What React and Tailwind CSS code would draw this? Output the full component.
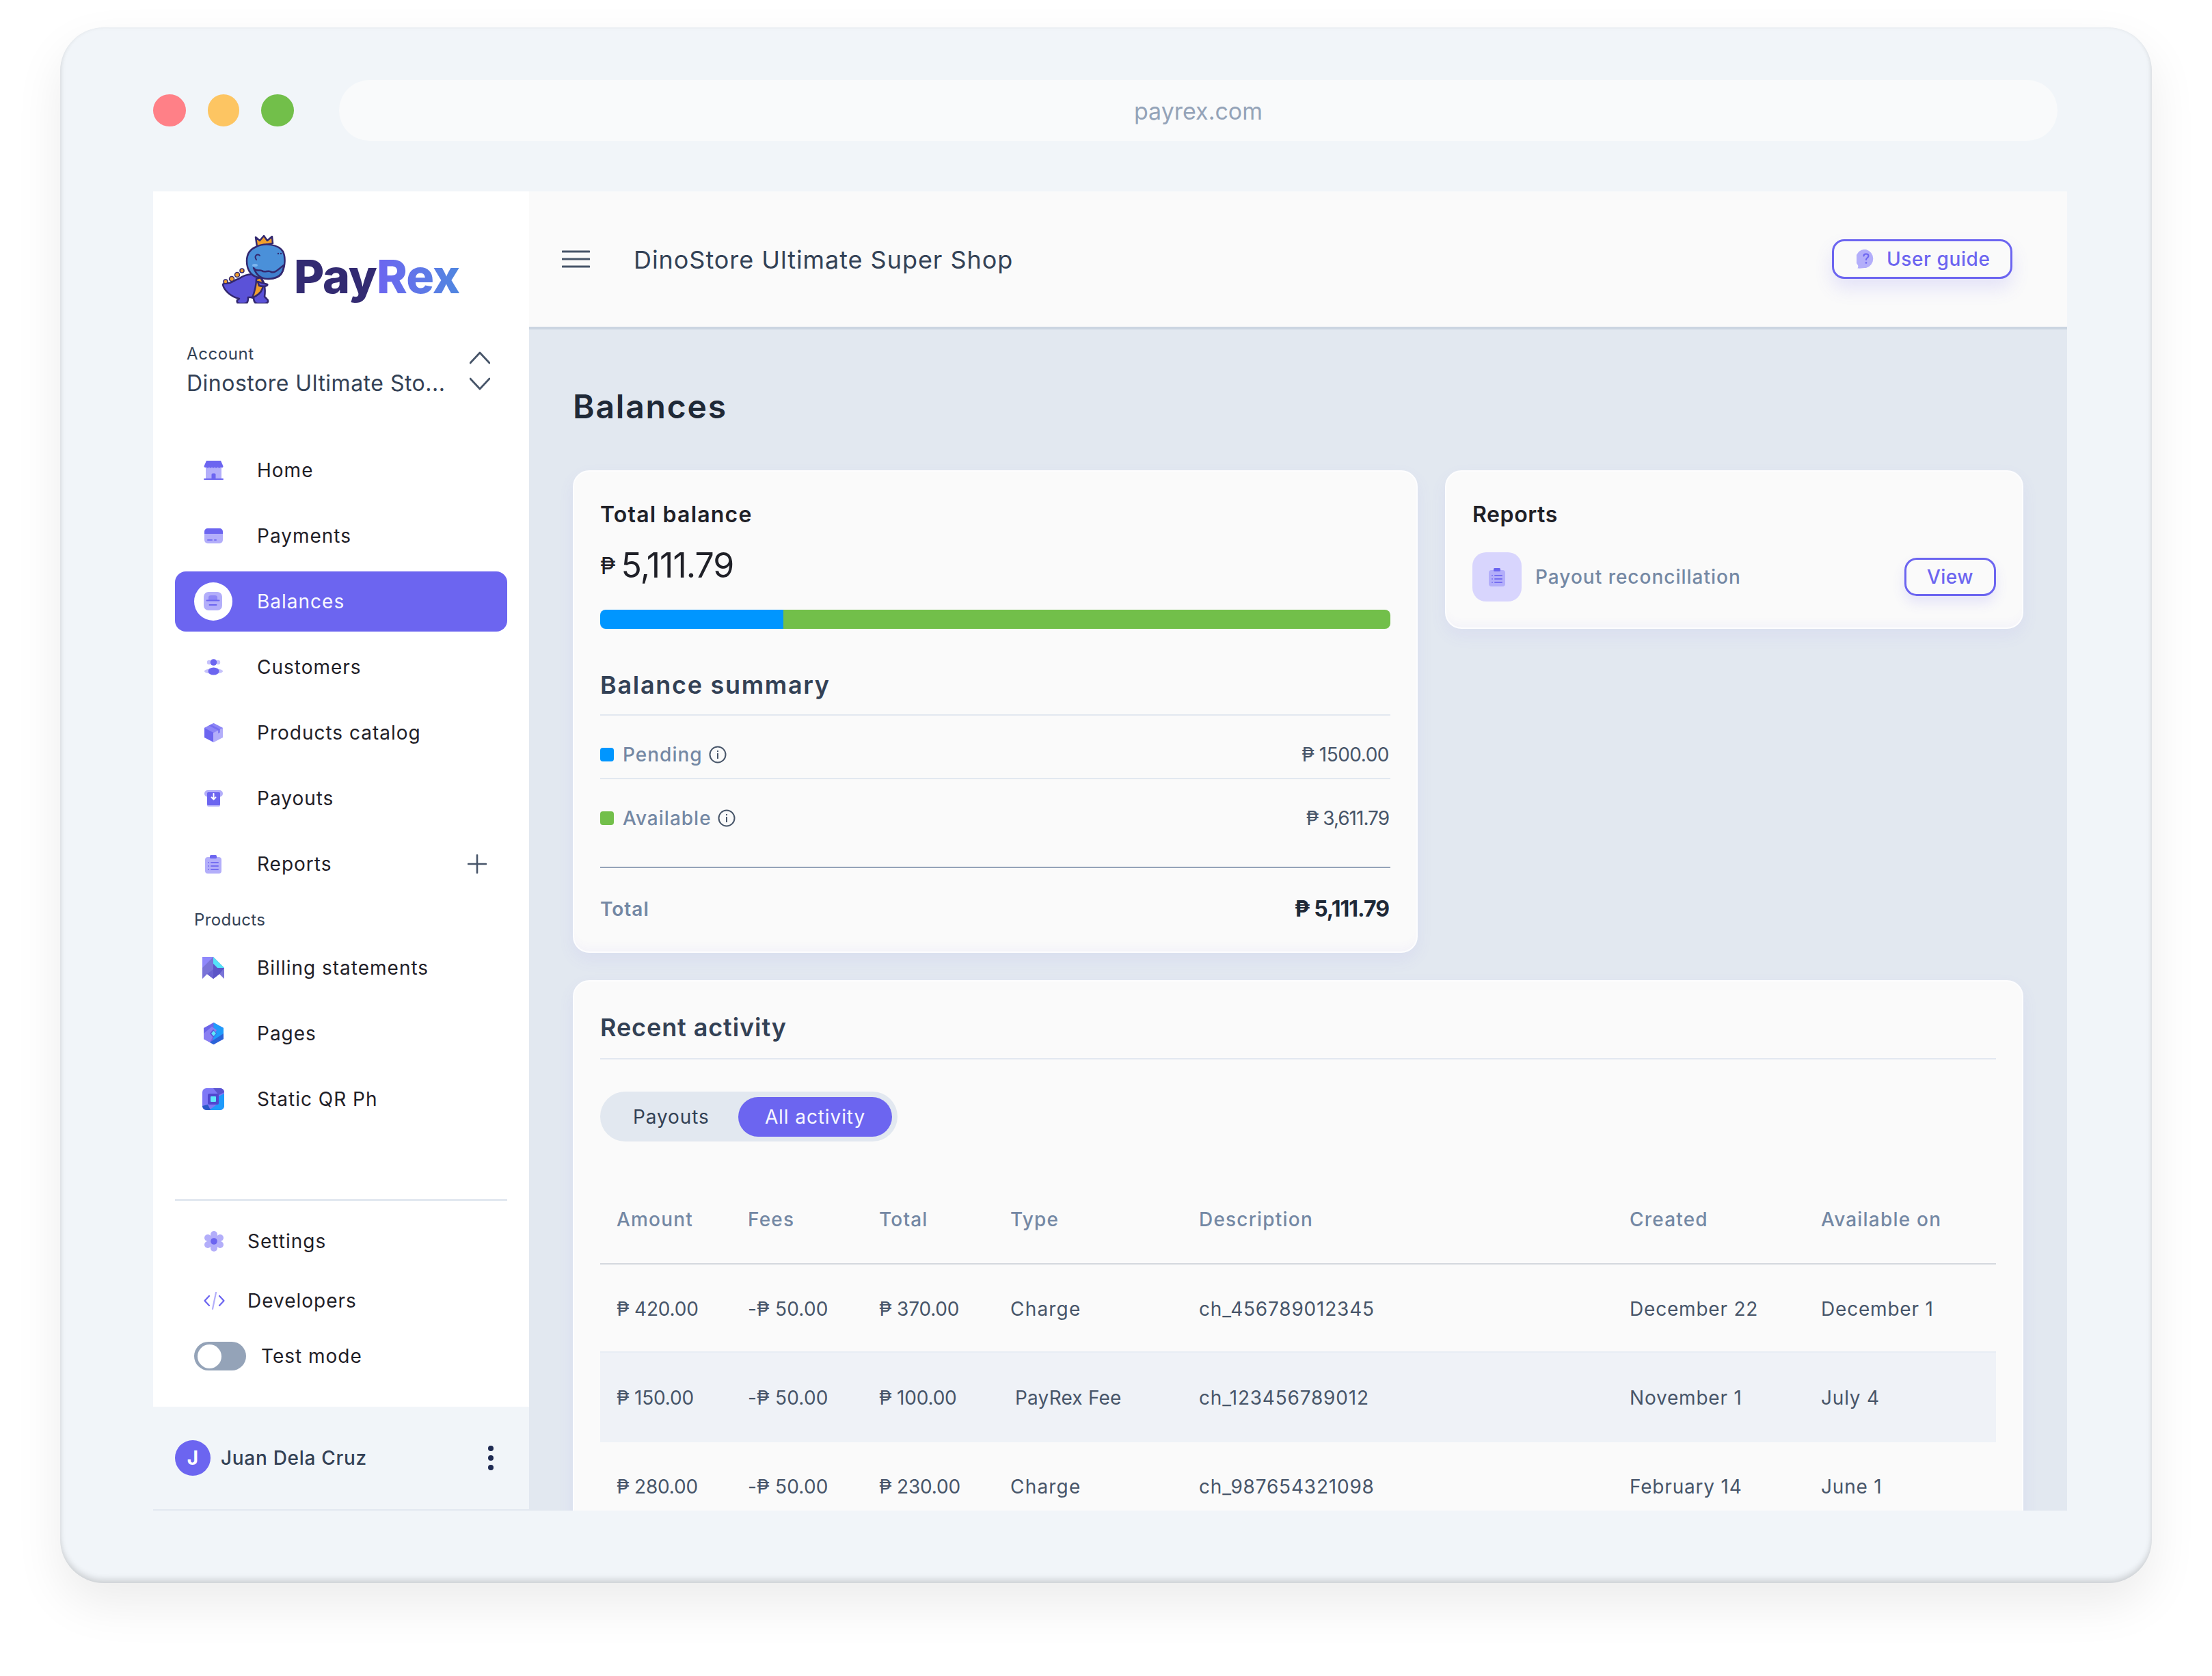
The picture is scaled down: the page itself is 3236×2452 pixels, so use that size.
import React from "react";

const D = "#6c65f0";
const L = "#b3aefa";

const Store = () => (
  <svg width="29" height="28" viewBox="0 0 29 28">
    <rect x="3" y="8" width="23" height="18" fill={L} />
    <path d="M4 0H25L28.5 8C28.5 10.5 26 10.5 25 9.5C24 11 21.5 11 20.5 9.5C19.5 11 17 11 16 9.5C15 11 13 11 12 9.5C11 11 9 11 8 9.5C7 11 4.5 11 4 9.5C2.5 10.5 0.5 10 0.5 8Z" fill={D} />
    <path d="M11.5 26V20.5C11.5 19 12.5 18.5 14.5 18.5C16.5 18.5 17.5 19 17.5 20.5V26Z" fill={D} />
    <rect x="0" y="26" width="29" height="2" rx="1" fill={D} />
  </svg>
);
const Card = () => (
  <svg width="27" height="22" viewBox="0 0 27 22">
    <rect width="27" height="22" rx="5" fill={L} />
    <path d="M0 8V5A5 5 0 0 1 5 0H22A5 5 0 0 1 27 5V8Z" fill={D} />
    <rect x="4" y="16" width="8" height="2" rx="1" fill={D} opacity=".8" />
    <rect x="14" y="16" width="4" height="2" rx="1" fill={D} opacity=".8" />
  </svg>
);
const Wallet = () => (
  <svg width="28" height="28" viewBox="0 0 28 28">
    <rect width="27" height="27" rx="7" fill={L} />
    <path d="M7 12V8C7 6 8.5 5 10.5 5H16.5C18.5 5 20 6 20 8V12Z" fill="#8d86f6" />
    <rect x="3.5" y="11.5" width="20" height="2" rx="1" fill={D} />
    <rect x="7.5" y="18" width="12" height="2" rx="1" fill={D} />
  </svg>
);
const People = () => (
  <svg width="27" height="24" viewBox="0 0 27 24">
    <circle cx="7" cy="5" r="3.2" fill={L} opacity=".75" />
    <circle cx="20" cy="5" r="3.2" fill={L} opacity=".75" />
    <ellipse cx="13.5" cy="18" rx="13.5" ry="4" fill={L} opacity=".75" />
    <circle cx="13.5" cy="5" r="4.8" fill={D} />
    <ellipse cx="13.5" cy="18" rx="8" ry="5.5" fill={D} />
  </svg>
);
const Box = () => (
  <svg width="27" height="28" viewBox="0 0 27 28">
    <path d="M13.5 0L27 7V21L13.5 28Z" fill={L} />
    <path d="M13.5 0L0 7V21L13.5 28Z" fill={D} />
    <path d="M13.5 0L27 7L13.5 14L0 7Z" fill="#8d86f6" />
    <path d="M6.5 3.5L20 10.5V15L23 13.5V9L9.5 2Z" fill={D} opacity=".7" />
    <path d="M13.5 14V28" stroke={L} strokeWidth="1" />
  </svg>
);
const Payout = () => (
  <svg width="27" height="24" viewBox="0 0 27 24">
    <rect y="0" width="27" height="10" rx="5" fill={L} />
    <rect x="4" y="20" width="19" height="4" rx="2" fill={L} />
    <rect x="4" y="3" width="19" height="19" rx="1.5" fill={D} />
    <path d="M13.5 5V13M10.5 10.5L13.5 13.5L16.5 10.5" stroke="#fff" strokeWidth="2" fill="none" strokeLinecap="round" strokeLinejoin="round" />
  </svg>
);
const Clip = ({ w = 24, h = 27 }) => (
  <svg width={w} height={h} viewBox="0 0 24 27">
    <rect y="3" width="24" height="24" rx="4" fill={L} />
    <rect x="7" y="0" width="10" height="5" rx="1.5" fill={D} />
    <g fill={D} opacity=".85">
      <rect x="4" y="10" width="2" height="2" rx="1" />
      <rect x="4" y="15" width="2" height="2" rx="1" />
      <rect x="4" y="20" width="2" height="2" rx="1" />
      <rect x="8" y="10" width="12" height="2" rx="1" />
      <rect x="8" y="15" width="12" height="2" rx="1" />
      <rect x="8" y="20" width="12" height="2" rx="1" />
    </g>
  </svg>
);
const Billing = () => (
  <svg width="32" height="32" viewBox="0 0 32 32">
    <path d="M0 0H16L32 16V32L25 25L16 32L7 25L0 32Z" fill="#7a74d8" />
    <path d="M0 0H16L0 16Z" fill="#8f88fb" />
    <path d="M16 0L32 16H22L16 10Z" fill="#55e3f8" />
    <path d="M16 10L22 16H32L25 25L16 32V18Z" fill="#5c55c7" />
    <path d="M16 18V32L7 25Z" fill="#6a63d2" />
  </svg>
);
const Hex = () => (
  <svg width="29" height="32" viewBox="0 0 29 32">
    <path d="M14.5 0L29 8V24L14.5 32L0 24V8Z" fill="#6c65e8" />
    <path d="M14.5 0L29 8V16L14 31Z" fill="#1f9bfb" />
    <path d="M29 16V24L14.5 32L9 29Z" fill="#2a63d8" />
    <path d="M0 24V16L12 6L19 11L9 29Z" fill="#8a7ff2" />
    <path d="M14 10L19 16L14 22L9 16Z" fill="#5a52d6" />
    <path d="M14.5 12L18 16L14.5 20L11 16Z" fill="#5de8fb" />
  </svg>
);
const Qr = () => (
  <svg width="32" height="32" viewBox="0 0 32 32">
    <rect width="32" height="32" rx="6" fill="#7e78f6" />
    <path d="M16 0H26A6 6 0 0 1 32 6L24 10Z" fill="#5b54d0" />
    <path d="M32 8V26A6 6 0 0 1 26 32H10L24 22V12Z" fill="#1f9bfb" />
    <path d="M0 26L8 24L12 32H6A6 6 0 0 1 0 26Z" fill="#2a58c8" />
    <rect x="8" y="8" width="16" height="16" rx="2" fill="#5147cf" />
    <rect x="12" y="12" width="8" height="8" rx="1" fill="#5ee9fc" />
  </svg>
);
const Gear = () => (
  <svg width="30" height="30" viewBox="0 0 30 30">
    <g fill={L}>
      <circle cx="15" cy="15" r="10" />
      <circle cx="15" cy="5" r="5" />
      <circle cx="15" cy="25" r="5" />
      <circle cx="6" cy="10" r="5" />
      <circle cx="24" cy="10" r="5" />
      <circle cx="6" cy="20" r="5" />
      <circle cx="24" cy="20" r="5" />
    </g>
    <circle cx="15" cy="15" r="4.8" fill={D} />
  </svg>
);
const Code = () => (
  <svg width="31" height="26" viewBox="0 0 31 26">
    <path d="M8 6L1.5 13L8 20M23 6L29.5 13L23 20" stroke={D} strokeWidth="2.2" fill="none" strokeLinecap="round" strokeLinejoin="round" />
    <path d="M18 1L13 25" stroke={L} strokeWidth="2.2" strokeLinecap="round" />
  </svg>
);
const Help = () => (
  <svg width="28" height="28" viewBox="0 0 28 28">
    <path d="M14 0A14 14 0 0 1 14 27C10 27 6 28 1.5 27.5C2.5 26 2.5 24.5 2 23A14 14 0 0 1 14 0Z" fill={L} />
    <path d="M10.5 9.5C10.5 7.5 12 6.5 14 6.5C16 6.5 17.5 7.5 17.5 9.5C17.5 12 14 12 14 15" stroke={D} strokeWidth="2" fill="none" strokeLinecap="round" />
    <circle cx="14" cy="19.5" r="1.3" fill={D} />
  </svg>
);
const Info = () => (
  <svg width="26" height="26" viewBox="0 0 26 26" className="shrink-0">
    <circle cx="13" cy="13" r="11.5" stroke="#475569" strokeWidth="2" fill="none" />
    <rect x="12" y="11" width="2" height="8" fill="#475569" />
    <rect x="12" y="7" width="2" height="2" fill="#475569" />
  </svg>
);
const Dino = () => (
  <svg width="93" height="100" viewBox="0 0 93 100" className="shrink-0">
    <g stroke="#33286f" strokeWidth="2.5" strokeLinejoin="round">
      <path d="M49 3L55 8L61 1L66 8L73 2L74 12L51 17Z" fill="#f0a02c" />
      <path d="M6 70C13 72 16 66 24 64C30 60 42 54 54 60C62 66 64 76 62 90L65 93C69 96 67 100 62 100H52C47 100 46 96 46 91L38 91C38 96 38 100 32 100H26C21 100 20 95 25 93C12 90 2 80 1 72C2 71 4 70 6 70Z" fill="#5b52d8" />
      <path d="M56 62C60 68 62 72 58 80C56 86 48 90 44 92C47 84 50 74 50 64Z" fill="#f0a02c" />
      <path d="M52 68L66 72C68 74 62 76 54 74Z" fill="#5b52d8" />
      <path d="M50 17C62 11 82 13 89 24C93 32 92 46 88 54C84 64 68 66 58 62C44 63 36 52 36 38C36 27 42 20 50 17Z" fill="#4a90d9" />
      <path d="M46 48C50 54 54 50 58 52C62 56 68 50 72 54C78 56 84 48 90 44C90 58 80 64 66 64C56 64 50 58 46 48Z" fill="#3f7fce" />
    </g>
    <g fill="#f0a02c" stroke="#33286f" strokeWidth="1.5">
      <circle cx="5" cy="68" r="3" />
      <circle cx="14" cy="64" r="3.5" />
      <circle cx="22" cy="58" r="3.5" />
      <circle cx="29" cy="52" r="3" />
    </g>
    <path d="M50 36C46 30 52 26 55 30" stroke="#33286f" strokeWidth="2" fill="none" strokeLinecap="round" />
    <ellipse cx="48" cy="44" rx="4" ry="2" fill="#7eb6ee" />
    <circle cx="82" cy="27" r="1.2" fill="#33286f" />
    <circle cx="86" cy="27" r="1.2" fill="#33286f" />
  </svg>
);

const nav = [
  { label: "Home", icon: <Store /> },
  { label: "Payments", icon: <Card /> },
  { label: "Balances", icon: <Wallet />, active: true },
  { label: "Customers", icon: <People /> },
  { label: "Products catalog", icon: <Box /> },
  { label: "Payouts", icon: <Payout /> },
  { label: "Reports", icon: <Clip />, plus: true },
];
const products = [
  { label: "Billing statements", icon: <Billing /> },
  { label: "Pages", icon: <Hex /> },
  { label: "Static QR Ph", icon: <Qr /> },
];

function NavItem({ item }) {
  return (
    <div className={`flex h-[88px] items-center rounded-[16px] pl-[28px] pr-[30px] text-[28px] ${item.active ? "bg-[#6c65f0] text-[#f8f8ff]" : "text-[#1f2027]"}`}>
      <span className={`flex h-[56px] w-[56px] shrink-0 items-center justify-center rounded-full ${item.active ? "bg-white" : ""}`}>{item.icon}</span>
      <span className="ml-[36px] tracking-[1px]">{item.label}</span>
      {item.plus && (
        <svg width="28" height="28" viewBox="0 0 28 28" className="ml-auto">
          <path d="M14 1V27M1 14H27" stroke="#475569" strokeWidth="2.6" strokeLinecap="round" />
        </svg>
      )}
    </div>
  );
}

function Sidebar() {
  return (
    <aside className="flex w-[550px] shrink-0 flex-col bg-white">
      <div className="flex h-[220px] items-start pl-[101px] pt-[64px]">
        <Dino />
        <div className="ml-[12px] mt-[24px] text-[68px] font-extrabold leading-[72px] tracking-[-1px]">
          <span className="text-[#332b72]">Pay</span>
          <span className="bg-linear-to-r from-[#6c65f0] to-[#4f86e0] bg-clip-text text-transparent">Rex</span>
        </div>
      </div>
      <div className="flex h-[144px] items-start justify-between pl-[49px] pr-[57px]">
        <div className="text-[#334155]">
          <div className="text-[24px] leading-[36px] tracking-[0.6px]">Account</div>
          <div className="mt-[3px] w-[390px] truncate text-[32px] leading-[44px] tracking-[0.5px]">Dinostore Ultimate Sto...</div>
        </div>
        <svg width="30" height="58" viewBox="0 0 30 58" className="mt-[14px] shrink-0">
          <path d="M1 17L15 2L29 17M1 40L15 55L29 40" stroke="#475569" strokeWidth="2.8" fill="none" strokeLinecap="round" strokeLinejoin="round" />
        </svg>
      </div>
      <div className="flex flex-col gap-[8px] px-[32px]">
        {nav.map((n) => (
          <NavItem key={n.label} item={n} />
        ))}
      </div>
      <div className="ml-[60px] mt-[21px] text-[24px] leading-[34px] tracking-[0.4px] text-[#334155]">Products</div>
      <div className="mt-[9px] flex flex-col gap-[8px] px-[32px]">
        {products.map((n) => (
          <NavItem key={n.label} item={n} />
        ))}
      </div>
      <div className="mx-[32px] mt-[102px] h-[3px] bg-[#e2e8f0]" />
      <div className="mt-[15px] flex flex-col pl-[60px] text-[28px] tracking-[1px] text-[#1f2027]">
        <div className="flex h-[87px] items-center">
          <span className="flex w-[58px] justify-center"><Gear /></span>
          <span className="ml-[20px]">Settings</span>
        </div>
        <div className="flex h-[87px] items-center">
          <span className="flex w-[58px] justify-center"><Code /></span>
          <span className="ml-[20px]">Developers</span>
        </div>
        <div className="mt-[17px] flex h-[42px] items-center">
          <div className="flex h-[42px] w-[76px] items-center rounded-full bg-[#94a3b8] pl-[5px]">
            <div className="h-[35px] w-[35px] rounded-full bg-white" />
          </div>
          <span className="ml-[22px]">Test mode</span>
        </div>
      </div>
      <div className="mt-auto flex h-[152px] items-center border-b-2 border-[#e2e8f0] bg-[#f1f5f9] px-[32px]">
        <div className="flex h-[52px] w-[52px] items-center justify-center rounded-full bg-[#6c65f0] text-[28px] font-bold text-white">J</div>
        <span className="ml-[15px] text-[28px] font-medium tracking-[0.7px] text-[#334155]">Juan Dela Cruz</span>
        <svg width="10" height="38" viewBox="0 0 10 38" className="ml-auto mr-[19px]">
          <circle cx="5" cy="5" r="4" fill="#1e2a52" />
          <circle cx="5" cy="19" r="4" fill="#1e2a52" />
          <circle cx="5" cy="33" r="4" fill="#1e2a52" />
        </svg>
      </div>
    </aside>
  );
}

const cardCls = "rounded-[24px] border-2 border-[#fdfdfe] bg-[#fafafa] shadow-[0_10px_24px_rgba(108,101,240,0.07),inset_0_-14px_14px_-10px_rgba(108,101,240,0.05)]";

function SummaryRow({ color, label, value, cls, valueCls }) {
  return (
    <div className={`flex items-center justify-between ${cls}`}>
      <div className="flex h-[40px] items-center">
        <span className={`h-[20px] w-[20px] rounded-[4px] ${color}`} />
        <span className="ml-[13px] text-[28px] font-medium leading-[40px] tracking-[1px] text-[#7488a4]">{label}</span>
        <span className="ml-[9px] flex"><Info /></span>
      </div>
      <span className={`pr-[2px] text-[28px] leading-[40px] text-[#475569] ${valueCls}`}>{value}</span>
    </div>
  );
}

function TotalCard() {
  return (
    <section className={`h-[706px] w-[1236px] shrink-0 px-[38px] pt-[41px] ${cardCls}`}>
      <div className="text-[32px] font-semibold leading-[44px] tracking-[1.2px] text-[#1f2027]">Total balance</div>
      <div className="mt-[20px] flex h-[64px] items-center text-[#1f2027]">
        <span className="text-[34px]">₱</span>
        <span className="ml-[8px] text-[50px] tracking-[-1px]">5,111.79</span>
      </div>
      <div className="mt-[33px] flex h-[28px] overflow-hidden rounded-[8px]">
        <div className="w-[268px] bg-[#0096ff]" />
        <div className="flex-1 bg-[#72bf4a]" />
      </div>
      <div className="mt-[57px] text-[36px] font-semibold leading-[50px] tracking-[1.7px] text-[#334155]">Balance summary</div>
      <div className="mt-[18px] h-[2px] bg-[#e2e8f0]" />
      <SummaryRow color="bg-[#0096ff]" label="Pending" value="₱ 1500.00" valueCls="tracking-[-0.5px]" cls="border-b-2 border-[#e2e8f0] pb-[14px] pt-[37px]" />
      <SummaryRow color="bg-[#72bf4a]" label="Available" value="₱ 3,611.79" valueCls="tracking-[-1px]" cls="pt-[37px]" />
      <div className="mt-[51px] h-[2px] bg-[#94a3b8]" />
      <div className="mt-[38px] flex h-[44px] items-center justify-between">
        <span className="text-[28px] font-semibold tracking-[1px] text-[#7488a4]">Total</span>
        <span className="pr-[2px] text-[32px] font-bold tracking-[-1px] text-[#1f2937]">₱ 5,111.79</span>
      </div>
    </section>
  );
}

function ReportsCard() {
  return (
    <section className={`flex-1 px-[38px] pb-[38px] pt-[41px] ${cardCls}`}>
      <div className="text-[32px] font-semibold leading-[44px] tracking-[0.6px] text-[#1f2027]">Reports</div>
      <div className="mt-[33px] flex h-[72px] items-center">
        <div className="flex h-[72px] w-[72px] items-center justify-center rounded-[20px] bg-[#d8d5fd]">
          <Clip w={24} h={27} />
        </div>
        <span className="ml-[20px] text-[28px] font-medium tracking-[1px] text-[#7488a4]">Payout reconcillation</span>
        <div className="ml-auto flex h-[56px] w-[134px] items-center justify-center rounded-[18px] border-[3px] border-[#6c65f0] text-[28px] font-medium tracking-[0.5px] text-[#6c65f0] shadow-[0_10px_18px_rgba(108,101,240,0.14)]">View</div>
      </div>
    </section>
  );
}

const cols = "grid grid-cols-[192px_192px_192px_276px_630px_280px_1fr] items-center pl-[24px]";
const cellTracks = ["tracking-[-0.2px]", "tracking-[0.2px]", "tracking-[-0.2px]", "tracking-[1.2px]", "tracking-[0.8px]", "tracking-[0.8px]", "tracking-[0.8px]"];
const rows = [
  { c: ["₱ 420.00", "-₱ 50.00", "₱ 370.00", "Charge", "ch_456789012345", "December 22", "December 1"], cls: "h-[127px] pt-[2px]" },
  { c: ["₱ 150.00", "-₱ 50.00", "₱ 100.00", "PayRex Fee", "ch_123456789012", "November 1", "July 4"], cls: "h-[133px] border-t-2 border-[#e8edf4] bg-[#eff2f7]", shift: true },
  { c: ["₱ 280.00", "-₱ 50.00", "₱ 230.00", "Charge", "ch_987654321098", "February 14", "June 1"], cls: "h-[130px]" },
];

function Activity() {
  return (
    <section className={`mt-[40px] px-[38px] pt-[42px] ${cardCls}`}>
      <div className="text-[36px] font-semibold leading-[50px] tracking-[0.9px] text-[#334155]">Recent activity</div>
      <div className="mt-[20px] h-[2px] bg-[#e2e8f0]" />
      <div className="mt-[47px] flex h-[73px] w-[435px] items-center rounded-full bg-[#e2e8f0] pl-[48px] pr-[8px] text-[28px] tracking-[0.9px]">
        <span className="text-[#334155]">Payouts</span>
        <span className="ml-auto flex h-[58px] w-[225px] items-center justify-center rounded-full bg-[#6c65f0] text-[#f8f8ff]">All activity</span>
      </div>
      <div className={`${cols} border-b-2 border-[#d4d8de] pb-[44px] pt-[94px] text-[28px] font-medium leading-[40px] tracking-[1.2px] text-[#7488a4]`}>
        {["Amount", "Fees", "Total", "Type", "Description", "Created", "Available on"].map((h) => (
          <span key={h}>{h}</span>
        ))}
      </div>
      {rows.map((r) => (
        <div key={r.c[4]} className={`${cols} ${r.cls} text-[28px] text-[#475569]`}>
          {r.c.map((v, i) => (
            <span key={i} className={r.shift && i === 3 ? "pl-[7px] tracking-[0.2px]" : cellTracks[i]}>{v}</span>
          ))}
        </div>
      ))}
    </section>
  );
}

export default function App() {
  return (
    <div className="h-[2452px] w-[3236px] overflow-hidden bg-white pl-[88px] pt-[40px] font-['Inter',sans-serif]">
      <div className="flex h-[2276px] w-[3060px] flex-col rounded-[64px] bg-[#f1f5f9] pl-[136px] pr-[124px] pt-[77px] shadow-[0_30px_70px_rgba(0,0,0,0.08),inset_0_-6px_9px_rgba(0,0,0,0.12),inset_0_0_6px_rgba(0,0,0,0.05)]">
        <div className="flex h-[89px] shrink-0 items-center">
          <span className="h-[47px] w-[48px] rounded-full bg-[#ff8087]" />
          <span className="ml-[32px] h-[47px] w-[46px] rounded-full bg-[#fdc562]" />
          <span className="ml-[32px] h-[47px] w-[48px] rounded-full bg-[#72bf4a]" />
          <div className="ml-[66px] mr-[14px] flex h-[89px] flex-1 items-center justify-center rounded-full bg-[#f9fafb] pt-[2px] text-[34px] text-[#94a3b8]">payrex.com</div>
        </div>
        <div className="mt-[74px] flex h-[1930px] shrink-0 overflow-hidden">
          <Sidebar />
          <main className="flex min-w-0 flex-1 flex-col bg-[#e2e8f0]">
            <header className="flex h-[202px] shrink-0 items-center border-b-4 border-[#cbd5e1] bg-[#fafafa] pl-[48px] pr-[80px]">
              <svg width="41" height="26" viewBox="0 0 41 26" className="shrink-0">
                <path d="M1 2H40M1 13H40M1 24H40" stroke="#475569" strokeWidth="3" strokeLinecap="round" />
              </svg>
              <h1 className="ml-[64px] pt-[2px] text-[36px] font-normal tracking-[0.95px] text-[#334155]">DinoStore Ultimate Super Shop</h1>
              <div className="relative ml-auto flex h-[58px] w-[264px] items-center rounded-[18px] border-[3px] border-[#6c65f0] pl-[33px] text-[28px] font-medium tracking-[0.6px] text-[#6c65f0] shadow-[0_14px_26px_rgba(108,101,240,0.15)]">
                <Help />
                <span className="ml-[16px]">User guide</span>
              </div>
            </header>
            <div className="min-h-0 flex-1 overflow-hidden px-[64px] pt-[83px]">
              <h2 className="text-[48px] font-semibold leading-[60px] tracking-[1.8px] text-[#1f2937]">Balances</h2>
              <div className="mt-[63px] flex items-start gap-[40px]">
                <TotalCard />
                <ReportsCard />
              </div>
              <Activity />
            </div>
          </main>
        </div>
      </div>
    </div>
  );
}
